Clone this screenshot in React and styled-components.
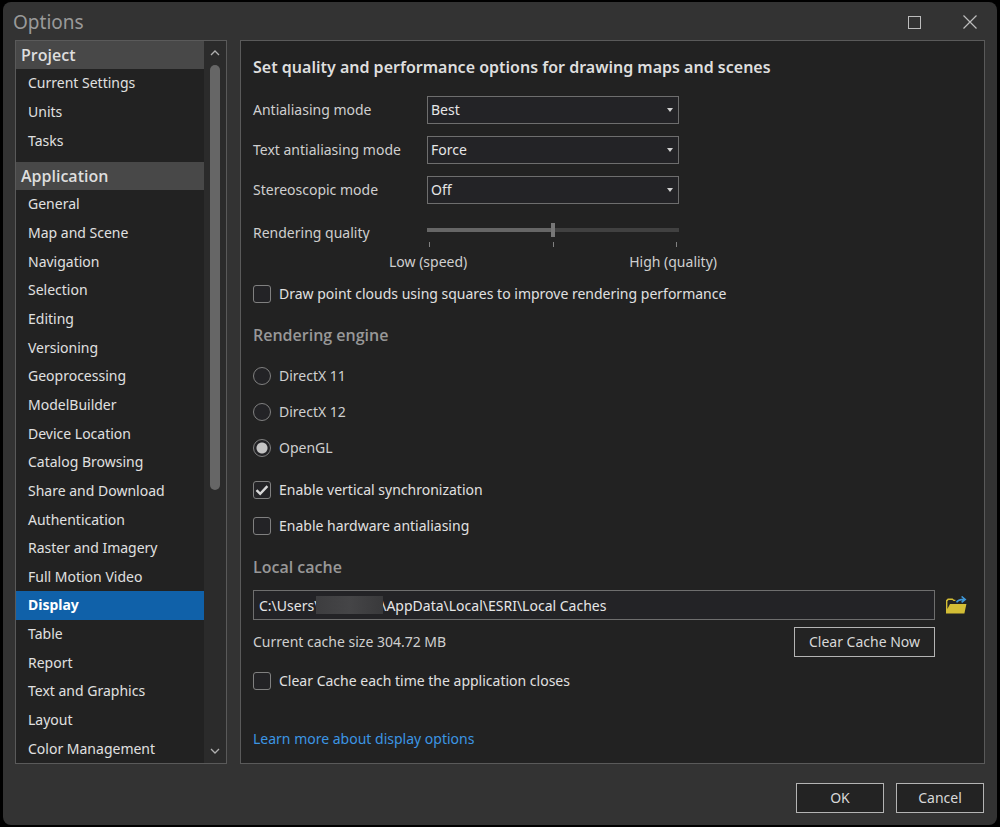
import React, { useState } from 'react';
import styled, { createGlobalStyle } from 'styled-components';

const GlobalStyle = createGlobalStyle`
    * {
        box-sizing: border-box;
    }
    body {
        margin: 0;
        background: #000;
        font-family: "Noto Sans", "Open Sans", sans-serif;
        font-size: 14px;
        line-height: 20px;
        color: #cfcfcf;
    }
    button, input, select {
        font: inherit;
        color: inherit;
        margin: 0;
    }
`;

const Page = styled.div`
    display: flex;
    min-height: 100vh;
    padding: 2px 3px 4px;
`;

const Dialog = styled.div`
    flex: 1;
    display: flex;
    flex-direction: column;
    padding: 0 10px 12px;
    background: #333;
    border-radius: 8px;
`;

const TitleBar = styled.header`
    display: flex;
    align-items: center;
    justify-content: space-between;
    height: 38px;
    padding: 2px 5px 0 0;
`;

const Title = styled.h1`
    margin: 0;
    font-size: 19px;
    line-height: 24px;
    font-weight: 400;
    color: #9a9a9a;
`;

const WindowButtons = styled.div`
    display: flex;
    gap: 32px;
`;

const IconButton = styled.button`
    display: flex;
    align-items: center;
    justify-content: center;
    width: ${(props) => props.width};
    height: 24px;
    padding: 0;
    border: 0;
    background: transparent;
    color: #bdbdbd;
`;

const Body = styled.div`
    flex: 1;
    display: flex;
    gap: 13px;
    padding: 0 2px;
`;

const Sidebar = styled.div`
    display: flex;
    width: 212px;
    flex-shrink: 0;
    border: 1px solid #5a5a5a;
    background: #222;
`;

const Nav = styled.nav`
    flex: 1;
    display: flex;
    flex-direction: column;
    gap: 7px;
`;

const Group = styled.section`
    flex: ${(props) => props.count} 0 auto;
    display: flex;
    flex-direction: column;
`;

const GroupTitle = styled.h2`
    margin: 0;
    padding: 0 5px;
    font-family: "Open Sans", sans-serif;
    font-size: 16px;
    line-height: 28px;
    font-weight: 600;
    color: #dedede;
    background: #484848;
`;

const List = styled.ul`
    flex: 1;
    display: flex;
    flex-direction: column;
    margin: 0;
    padding: 0;
    list-style: none;
`;

const ListItem = styled.li`
    flex: 1 0 28px;
    display: flex;
`;

const ListLink = styled.a`
    flex: 1;
    display: flex;
    align-items: center;
    padding: 0 12px;
    text-decoration: none;
    color: ${(props) => props.$active ? '#fff' : '#e0e0e0'};
    font-weight: ${(props) => props.$active ? 700 : 400};
    background: ${(props) => props.$active ? '#1061a9' : 'transparent'};
`;

const ScrollBar = styled.div`
    display: flex;
    flex-direction: column;
    align-items: center;
    width: 22px;
    background: #2b2b2b;
`;

const ScrollTrack = styled.div`
    flex: 1;
    width: 10px;
`;

const ScrollThumb = styled.div`
    height: 63%;
    border-radius: 5px;
    background: #666;
`;

const Panel = styled.main`
    flex: 1;
    padding: 14px 12px;
    border: 1px solid #5a5a5a;
    background: #222;
`;

const PanelTitle = styled.h2`
    margin: 0 0 17px;
    font-size: 16px;
    line-height: 24px;
    font-weight: 600;
    color: #dedede;
`;

const Field = styled.div`
    display: flex;
    align-items: center;
    height: 28px;
    margin-bottom: 12px;
`;

const FieldLabel = styled.label`
    width: 174px;
`;

const SelectBox = styled.div`
    position: relative;
    width: 252px;
`;

const Select = styled.select`
    display: block;
    width: 100%;
    height: 28px;
    padding: 0 3px;
    appearance: none;
    border: 1px solid #6e6e6e;
    border-radius: 0;
    background: #232326;
    color: #e6e6e6;
`;

const Arrow = styled.svg`
    position: absolute;
    right: 6px;
    top: 12px;
    pointer-events: none;
`;

const SliderField = styled.div`
    display: flex;
    align-items: flex-start;
    margin-bottom: 12px;
`;

const SliderLabel = styled(FieldLabel)`
    padding-top: 7px;
`;

const SliderBox = styled.div`
    width: 252px;
    padding-top: 7px;
`;

const Slider = styled.input`
    display: block;
    width: 100%;
    height: 14px;
    appearance: none;
    background: linear-gradient(to right, #666 50%, #414141 50%) center / 100% 4px no-repeat;

    &::-webkit-slider-thumb {
        appearance: none;
        width: 4px;
        height: 14px;
        background: #777;
    }
`;

const Ticks = styled.div`
    display: flex;
    justify-content: space-between;
    margin-top: 5px;
    padding: 0 2px;
`;

const Tick = styled.span`
    width: 1px;
    height: 5px;
    background: #808080;
`;

const SliderEnds = styled.div`
    display: flex;
    justify-content: space-between;
    margin: 5px -38px 0;
`;

const Option = styled.label`
    display: flex;
    align-items: center;
    gap: 8px;
    height: 20px;
    margin-bottom: ${(props) => props.gap || '16px'};
    color: ${(props) => props.color || '#e0e0e0'};
`;

const Check = styled.input`
    flex-shrink: 0;
    width: 18px;
    height: 18px;
    appearance: none;
    border: 1px solid #808080;
    border-radius: 3px;
    background: #232326;

    &:checked {
        background: #232326 url("data:image/svg+xml,%3Csvg xmlns='http://www.w3.org/2000/svg' viewBox='0 0 16 16'%3E%3Cpath d='M2.5 8.2 L6.2 11.8 L13.4 4.2' fill='none' stroke='%23d8d8d8' stroke-width='2.4'/%3E%3C/svg%3E") center / 16px 16px no-repeat;
    }
`;

const Radio = styled(Check)`
    border-radius: 50%;

    &:checked {
        background: radial-gradient(circle, #c4c4c4 5px, #232326 6px);
    }
`;

const SectionTitle = styled.h3`
    margin: 0 0 ${(props) => props.gap};
    font-family: "Open Sans", sans-serif;
    font-size: 16px;
    line-height: 22px;
    font-weight: 600;
    color: #989898;
`;

const CacheGrid = styled.div`
    display: grid;
    grid-template-columns: 1fr 21px;
    align-items: center;
    gap: 7px 11px;
    margin: 0 5px 14px 0;
`;

const PathBox = styled.div`
    position: relative;
`;

const PathInput = styled.input`
    display: block;
    width: 100%;
    height: 30px;
    padding: 0 5px;
    border: 1px solid #6e6e6e;
    background: #232326;
    color: #e6e6e6;
`;

const Redaction = styled.span`
    position: absolute;
    left: 63px;
    top: 6px;
    width: 67px;
    height: 18px;
    background: linear-gradient(to right, #3d3d3f, #454547 50%, #39393b);
`;

const CacheRow = styled.div`
    display: flex;
    align-items: center;
    justify-content: space-between;
`;

const Button = styled.button`
    width: ${(props) => props.width};
    height: 30px;
    padding: 0;
    border: 1px solid #b4b4b4;
    background: #232323;
    color: #d8d8d8;
`;

const HelpLink = styled.a`
    color: #3c96e4;
    text-decoration: none;
`;

const Footer = styled.footer`
    display: flex;
    justify-content: flex-end;
    gap: 12px;
    padding: 19px 3px 0;
`;

const groups = [
    { title: 'Project', items: ['Current Settings', 'Units', 'Tasks'] },
    {
        title: 'Application',
        items: [
            'General', 'Map and Scene', 'Navigation', 'Selection', 'Editing',
            'Versioning', 'Geoprocessing', 'ModelBuilder', 'Device Location',
            'Catalog Browsing', 'Share and Download', 'Authentication',
            'Raster and Imagery', 'Full Motion Video', 'Display', 'Table',
            'Report', 'Text and Graphics', 'Layout', 'Color Management',
        ],
    },
];

const modes = [
    { id: 'antialiasing', label: 'Antialiasing mode', options: ['Best', 'Better', 'Fast', 'None'] },
    { id: 'text-antialiasing', label: 'Text antialiasing mode', options: ['Force', 'Normal', 'None'] },
    { id: 'stereoscopic', label: 'Stereoscopic mode', options: ['Off', 'Anaglyph'] },
];

const engines = ['DirectX 11', 'DirectX 12', 'OpenGL'];

const cachePath = 'C:\\Users\\' + '\u00a0'.repeat(17) + '\\AppData\\Local\\ESRI\\Local Caches';

const Chevron = ({ d }) => (
    <svg width="10" height="6" viewBox="0 0 10 6" fill="none" stroke="#b0b0b0" strokeWidth="1.3">
        <path d={d} />
    </svg>
);

const FolderIcon = () => (
    <svg width="21" height="19" viewBox="0 0 21 19">
        <path d="M0 17.5V4.2L1.8 2.6H6.6L8 3.8H9.4V5H7.4L6.4 4H2.6L1.4 5.2V13L4 8H20.4L18.4 17.5Z" fill="#d3bd35" />
        <path d="M10.6 6.4C11.6 4 14 3.2 19 3.4M15.6 0.5L19.2 3.4L15.6 6.4" fill="none" stroke="#3f97d8" strokeWidth="1.6" />
    </svg>
);

const App = () => {
    const [page, setPage] = useState('Display');
    const [engine, setEngine] = useState('OpenGL');

    return (
        <Page>
            <GlobalStyle />
            <Dialog role="dialog" aria-labelledby="dialog-title">
                <TitleBar>
                    <Title id="dialog-title">Options</Title>
                    <WindowButtons>
                        <IconButton width="24px" aria-label="Maximize">
                            <svg width="13" height="13" viewBox="0 0 13 13" fill="none" stroke="currentColor">
                                <rect x="0.5" y="0.5" width="12" height="12" />
                            </svg>
                        </IconButton>
                        <IconButton width="24px" aria-label="Close">
                            <svg width="14" height="14" viewBox="0 0 14 14" fill="none" stroke="currentColor" strokeWidth="1.2">
                                <path d="M0.5 0.5L13.5 13.5M13.5 0.5L0.5 13.5" />
                            </svg>
                        </IconButton>
                    </WindowButtons>
                </TitleBar>

                <Body>
                    <Sidebar>
                        <Nav>
                            {groups.map((group) => (
                                <Group key={group.title} count={group.items.length}>
                                    <GroupTitle>{group.title}</GroupTitle>
                                    <List>
                                        {group.items.map((item) => (
                                            <ListItem key={item}>
                                                <ListLink href="#" $active={item === page} onClick={() => setPage(item)}>
                                                    {item}
                                                </ListLink>
                                            </ListItem>
                                        ))}
                                    </List>
                                </Group>
                            ))}
                        </Nav>
                        <ScrollBar>
                            <IconButton width="22px" aria-label="Scroll up"><Chevron d="M1 5L5 1L9 5" /></IconButton>
                            <ScrollTrack><ScrollThumb /></ScrollTrack>
                            <IconButton width="22px" aria-label="Scroll down"><Chevron d="M1 1L5 5L9 1" /></IconButton>
                        </ScrollBar>
                    </Sidebar>

                    <Panel>
                        <PanelTitle>Set quality and performance options for drawing maps and scenes</PanelTitle>
                        {modes.map((mode) => (
                            <Field key={mode.id}>
                                <FieldLabel htmlFor={mode.id}>{mode.label}</FieldLabel>
                                <SelectBox>
                                    <Select id={mode.id}>
                                        {mode.options.map((option) => <option key={option}>{option}</option>)}
                                    </Select>
                                    <Arrow width="6" height="4" viewBox="0 0 6 4"><path d="M0 0H6L3 4Z" fill="#d0d0d0" /></Arrow>
                                </SelectBox>
                            </Field>
                        ))}
                        <SliderField>
                            <SliderLabel htmlFor="quality">Rendering quality</SliderLabel>
                            <SliderBox>
                                <Slider id="quality" type="range" min="0" max="2" defaultValue="1" />
                                <Ticks><Tick /><Tick /><Tick /></Ticks>
                                <SliderEnds><span>Low (speed)</span><span>High (quality)</span></SliderEnds>
                            </SliderBox>
                        </SliderField>
                        <Option gap="20px">
                            <Check type="checkbox" />
                            Draw point clouds using squares to improve rendering performance
                        </Option>

                        <SectionTitle gap="20px">Rendering engine</SectionTitle>
                        {engines.map((name, i) => (
                            <Option key={name} color="#cfcfcf" gap={i === engines.length - 1 ? '22px' : '16px'}>
                                <Radio type="radio" name="engine" checked={name === engine} onChange={() => setEngine(name)} />
                                {name}
                            </Option>
                        ))}
                        <Option>
                            <Check type="checkbox" defaultChecked />
                            Enable vertical synchronization
                        </Option>
                        <Option gap="20px">
                            <Check type="checkbox" />
                            Enable hardware antialiasing
                        </Option>

                        <SectionTitle gap="12px">Local cache</SectionTitle>
                        <CacheGrid>
                            <PathBox>
                                <PathInput aria-label="Local cache" defaultValue={cachePath} />
                                <Redaction />
                            </PathBox>
                            <IconButton width="21px" aria-label="Browse"><FolderIcon /></IconButton>
                            <CacheRow>
                                <span>Current cache size 304.72 MB</span>
                                <Button width="141px">Clear Cache Now</Button>
                            </CacheRow>
                        </CacheGrid>
                        <Option gap="38px">
                            <Check type="checkbox" />
                            Clear Cache each time the application closes
                        </Option>
                        <HelpLink href="#">Learn more about display options</HelpLink>
                    </Panel>
                </Body>

                <Footer>
                    <Button width="88px">OK</Button>
                    <Button width="88px">Cancel</Button>
                </Footer>
            </Dialog>
        </Page>
    );
};

export default App;
